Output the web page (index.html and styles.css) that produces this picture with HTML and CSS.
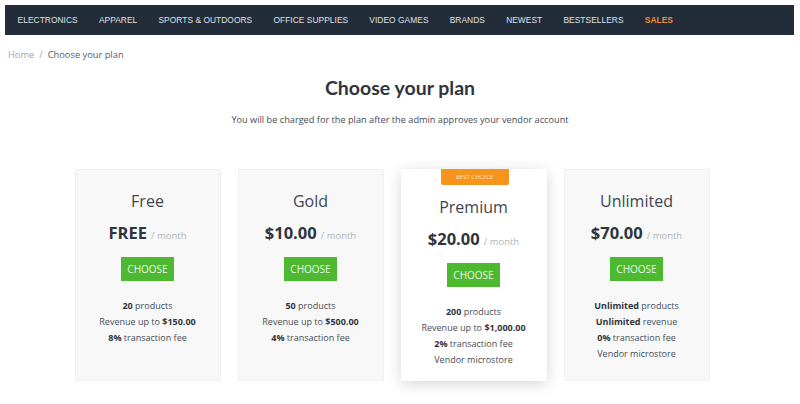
FILE: index.html
```html
<!DOCTYPE html>
<html lang="en">
<head>
<meta charset="utf-8">
<title>Choose your plan</title>
<link rel="stylesheet" href="styles.css">
</head>
<body>
<nav class="topnav">
  <a class="nav-item">Electronics</a>
  <a class="nav-item">Apparel</a>
  <a class="nav-item">Sports &amp; Outdoors</a>
  <a class="nav-item">Office Supplies</a>
  <a class="nav-item">Video Games</a>
  <a class="nav-item">Brands</a>
  <a class="nav-item">Newest</a>
  <a class="nav-item">Bestsellers</a>
  <a class="nav-item nav-sales">Sales</a>
</nav>
<div class="breadcrumb">
  <span class="crumb-link">Home</span>
  <span class="crumb-sep">/</span>
  <span class="crumb-current">Choose your plan</span>
</div>
<main class="plans">
  <h1 class="plans-title">Choose your plan</h1>
  <p class="plans-sub">You will be charged for the plan after the admin approves your vendor account</p>
  <div class="plan-row">
    <div class="plan">
      <div class="plan-name">Free</div>
      <div class="plan-price"><b>FREE</b> <span class="per">/ month</span></div>
      <button class="choose">CHOOSE</button>
      <ul class="features">
        <li><b>20</b> products</li>
        <li>Revenue up to <b>$150.00</b></li>
        <li><b>8%</b> transaction fee</li>
      </ul>
    </div>
    <div class="plan">
      <div class="plan-name">Gold</div>
      <div class="plan-price"><b>$10.00</b> <span class="per">/ month</span></div>
      <button class="choose">CHOOSE</button>
      <ul class="features">
        <li><b>50</b> products</li>
        <li>Revenue up to <b>$500.00</b></li>
        <li><b>4%</b> transaction fee</li>
      </ul>
    </div>
    <div class="plan plan-best">
      <span class="badge">BEST CHOICE</span>
      <div class="plan-name">Premium</div>
      <div class="plan-price"><b>$20.00</b> <span class="per">/ month</span></div>
      <button class="choose">CHOOSE</button>
      <ul class="features">
        <li><b>200</b> products</li>
        <li>Revenue up to <b>$1,000.00</b></li>
        <li><b>2%</b> transaction fee</li>
        <li>Vendor microstore</li>
      </ul>
    </div>
    <div class="plan">
      <div class="plan-name">Unlimited</div>
      <div class="plan-price"><b>$70.00</b> <span class="per">/ month</span></div>
      <button class="choose">CHOOSE</button>
      <ul class="features">
        <li><b>Unlimited</b> products</li>
        <li><b>Unlimited</b> revenue</li>
        <li><b>0%</b> transaction fee</li>
        <li>Vendor microstore</li>
      </ul>
    </div>
  </div>
</main>
</body>
</html>
```
FILE: styles.css
```css
* { box-sizing: border-box; }
html, body { margin: 0; padding: 0; }
body {
  background: #ffffff;
  font-family: "Open Sans", "Liberation Sans", sans-serif;
  color: #3f4650;
  width: 800px;
  height: 404px;
  overflow: hidden;
}
.topnav {
  margin: 5px 6px 0 5px;
  height: 30px;
  background: #232d3a;
  display: flex;
  align-items: center;
  padding-left: 2px;
}
.nav-item {
  font-family: "Liberation Sans", Arial, sans-serif;
  font-size: 8.4px;
  text-transform: uppercase;
  color: #dfe3e8;
  padding: 0 10.6px;
  letter-spacing: 0.05px;
}
.nav-sales { color: #f0902a; font-weight: bold; }
.breadcrumb {
  padding: 0 8px;
  margin-top: 13px;
  height: 14px;
  font-size: 9.3px;
  line-height: 14px;
  display: flex;
  gap: 5px;
}
.crumb-link { color: #a0a6ad; }
.crumb-sep { color: #a0a6ad; }
.crumb-current { color: #555c64; }
.plans {
  display: flex;
  flex-direction: column;
  align-items: center;
}
.plans-title {
  margin: 15px 0 0;
  font-family: Lato, "Open Sans", sans-serif;
  font-size: 19.5px;
  line-height: 22px;
  font-weight: 700;
  color: #2f353d;
  letter-spacing: 0;
}
.plans-sub {
  margin: 14px 0 0;
  font-size: 9.2px;
  line-height: 14px;
  color: #444b53;
}
.plan-row {
  margin-top: 42px;
  display: flex;
  gap: 17px;
  padding-right: 16px;
}
.plan {
  position: relative;
  width: 146px;
  height: 212px;
  background: #f8f8f9;
  border: 1px solid #f0f1f2;
  display: flex;
  flex-direction: column;
  align-items: center;
  padding-top: 20px;
}
.plan-best {
  background: #ffffff;
  border-color: #ffffff;
  box-shadow: 0 3px 14px rgba(0, 0, 0, 0.16);
  padding-top: 26px;
}
.badge {
  position: absolute;
  top: -1px;
  left: 39px;
  width: 68px;
  height: 16px;
  background: #f7941d;
  color: #fde4c4;
  font-size: 6px;
  line-height: 16px;
  text-align: center;
  border-radius: 0 0 2px 2px;
}
.plan-name {
  font-size: 16px;
  line-height: 22px;
  height: 22px;
  color: #3f4650;
}
.plan-price {
  margin-top: 10px;
  height: 22px;
  display: flex;
  align-items: baseline;
  gap: 4px;
  white-space: nowrap;
}
.plan-price b {
  font-size: 16.5px;
  line-height: 22px;
  font-weight: 700;
  color: #2f353d;
}
.per {
  font-size: 9.5px;
  color: #b0b4b9;
}
.choose {
  margin-top: 13px;
  width: 53px;
  height: 24px;
  border: 0;
  padding: 0;
  background: #4cb930;
  color: #eaf7e4;
  font-family: "Open Sans", sans-serif;
  font-size: 10px;
}
.features {
  list-style: none;
  margin: 17px 0 0;
  padding: 0;
  text-align: center;
  font-size: 9px;
  line-height: 16px;
  color: #464d55;
}
.features b { color: #2f353d; }
```
